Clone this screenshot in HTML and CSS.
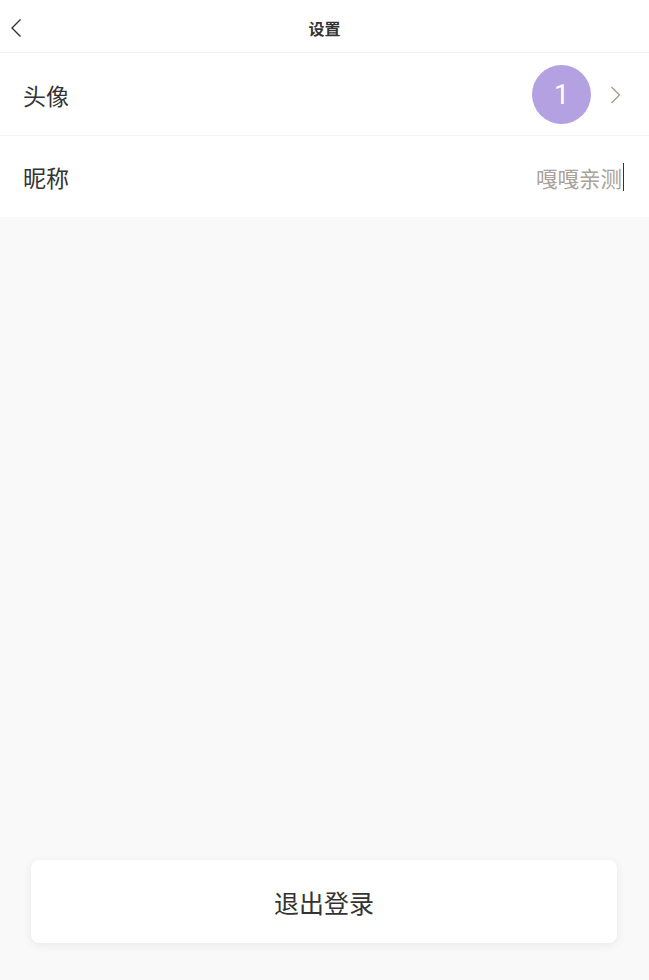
FILE: index.html
```html
<!DOCTYPE html>
<html lang="zh-CN">
<head>
<meta charset="utf-8">
<title>设置</title>
<link rel="stylesheet" href="styles.css">
</head>
<body>
<div class="page">
  <header class="nav">
    <span class="back">
      <svg width="12" height="20" viewBox="0 0 12 20"><path d="M10.5 1.5 L2 10 L10.5 18.5" fill="none" stroke="#333" stroke-width="1.4"/></svg>
    </span>
    <h1 class="title">设置</h1>
  </header>
  <section class="list">
    <div class="row row-avatar">
      <span class="label">头像</span>
      <div class="right">
        <span class="avatar">1</span>
        <svg class="chev" width="12" height="18" viewBox="0 0 12 18"><path d="M1.5 1 L9.5 9 L1.5 17" fill="none" stroke="#ab9883" stroke-width="1.3"/></svg>
      </div>
    </div>
    <div class="row row-name">
      <span class="label">昵称</span>
      <span class="value">嘎嘎亲测<span class="caret"></span></span>
    </div>
  </section>
  <div class="spacer"></div>
  <button class="logout">退出登录</button>
</div>
</body>
</html>
```
FILE: styles.css
```css
* { box-sizing: border-box; }
html, body { margin: 0; padding: 0; }
body {
  background: #f9f9f9;
  font-family: "Noto Sans CJK SC", "Noto Sans", sans-serif;
  color: #333;
}
.page {
  min-height: 980px;
  display: flex;
  flex-direction: column;
}
.nav {
  height: 53px;
  background: #fff;
  border-bottom: 1px solid #f3f3f3;
  display: flex;
  align-items: center;
  justify-content: center;
  position: relative;
}
.back {
  position: absolute;
  left: 10px;
  top: 18px;
  display: flex;
}
.title {
  margin: 0;
  font-size: 16px;
  font-weight: 700;
  color: #333;
  margin-top: 4px;
}
.list { background: #fff; }
.row {
  display: flex;
  align-items: center;
  justify-content: space-between;
  padding: 0 25px 0 23px;
}
.row-avatar {
  height: 83px;
  border-bottom: 1px solid #f3f3f3;
}
.row-name { height: 81px; }
.label {
  font-size: 23px;
  color: #333;
  margin-top: 1px;
}
.right {
  display: flex;
  align-items: center;
  gap: 19px;
}
.avatar {
  width: 59px;
  height: 59px;
  border-radius: 50%;
  background: #b4a1e2;
  color: #fff;
  font-family: "Roboto", "Noto Sans", sans-serif;
  font-size: 27px;
  display: flex;
  align-items: center;
  justify-content: center;
  margin-top: 1px;
}
.chev { margin-top: 2px; margin-right: 2px; }
.value {
  font-size: 21.5px;
  color: #aaa19a;
  display: flex;
  align-items: center;
  margin-right: 0;
  margin-top: 1px;
}
.caret {
  display: inline-block;
  width: 1px;
  height: 28px;
  background: #333;
  margin-left: 1px;
}
.spacer { flex: 1; }
.logout {
  margin: 0 32px 37px 31px;
  height: 83px;
  background: #fff;
  border: none;
  border-radius: 8px;
  box-shadow: 0 2px 10px rgba(0,0,0,0.07);
  font-family: "Noto Sans CJK SC", "Noto Sans", sans-serif;
  font-size: 25px;
  color: #333;
  padding: 0;
}
```
